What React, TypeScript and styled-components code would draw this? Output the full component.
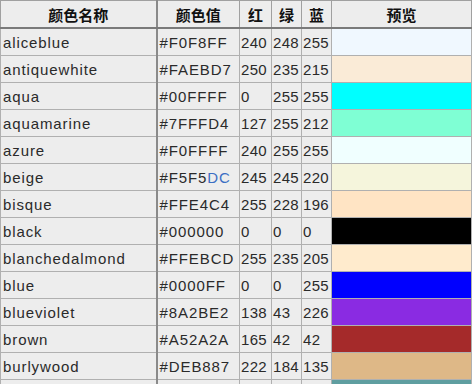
import React from 'react';
import styled, {createGlobalStyle} from 'styled-components';

const GlobalStyle = createGlobalStyle`
  html, body {
    margin: 0;
    padding: 0;
    background: #ffffff;
  }
`;

const Table = styled.table`
  width: 472px;
  table-layout: fixed;
  border-collapse: collapse;
  background: #ededed;
  font-family: "Liberation Sans", Arial, "Noto Sans CJK SC", sans-serif;
  font-size: 15px;
  color: #2a2a2a;
  border: 1px solid #a8a8a8;
`;

const HeadCell = styled.th<{$wide?: boolean}>`
  height: 26px;
  padding: 0;
  font-family: "Noto Sans CJK SC", "Liberation Sans", sans-serif;
  font-size: 15px;
  font-weight: 700;
  color: #111;
  text-align: center;
  border: 1px solid #a0a0a0;
  border-bottom: 2px solid #7a7a7a;
  border-right: ${p => (p.$wide ? '2px solid #8a8a8a' : '1px solid #a0a0a0')};
`;

const Cell = styled.td<{$wide?: boolean}>`
  height: 26px;
  padding: 0 0 0 2px;
  letter-spacing: 0.9px;
  white-space: nowrap;
  overflow: hidden;
  border: 1px solid #b0b0b0;
  border-right: ${p => (p.$wide ? '2px solid #8a8a8a' : '1px solid #b0b0b0')};
`;

const NumCell = styled(Cell)`
  padding-left: 1px;
  letter-spacing: 0.3px;
`;

const Swatch = styled.td`
  padding: 0;
  border: 1px solid #b0b0b0;
`;

const Tail = styled.span`
  color: #3b6fc4;
`;

type Row = [string, string, number, number, number];

const rows: Row[] = [
  ['aliceblue', 'F0F8FF', 240, 248, 255],
  ['antiquewhite', 'FAEBD7', 250, 235, 215],
  ['aqua', '00FFFF', 0, 255, 255],
  ['aquamarine', '7FFFD4', 127, 255, 212],
  ['azure', 'F0FFFF', 240, 255, 255],
  ['beige', 'F5F5DC', 245, 245, 220],
  ['bisque', 'FFE4C4', 255, 228, 196],
  ['black', '000000', 0, 0, 0],
  ['blanchedalmond', 'FFEBCD', 255, 235, 205],
  ['blue', '0000FF', 0, 0, 255],
  ['blueviolet', '8A2BE2', 138, 43, 226],
  ['brown', 'A52A2A', 165, 42, 42],
  ['burlywood', 'DEB887', 222, 184, 135],
  ['cadetblue', '5F9EA0', 95, 158, 160],
];

const App: React.FC = () => {
  return (
    <>
      <GlobalStyle />
      <Table>
        <colgroup>
          <col style={{width: 156}} />
          <col style={{width: 83}} />
          <col style={{width: 32}} />
          <col style={{width: 30}} />
          <col style={{width: 30}} />
          <col />
        </colgroup>
        <thead>
          <tr>
            <HeadCell $wide>颜色名称</HeadCell>
            <HeadCell>颜色值</HeadCell>
            <HeadCell>红</HeadCell>
            <HeadCell>绿</HeadCell>
            <HeadCell>蓝</HeadCell>
            <HeadCell>预览</HeadCell>
          </tr>
        </thead>
        <tbody>
          {rows.map(([name, hex, r, g, b]) => (
            <tr key={name}>
              <Cell $wide>{name}</Cell>
              <Cell>
                {name === 'beige' ? (
                  <>#F5F5<Tail>DC</Tail></>
                ) : (
                  '#' + hex
                )}
              </Cell>
              <NumCell>{r}</NumCell>
              <NumCell>{g}</NumCell>
              <NumCell>{b}</NumCell>
              <Swatch style={{background: '#' + hex}} />
            </tr>
          ))}
        </tbody>
      </Table>
    </>
  );
};

export default App;
